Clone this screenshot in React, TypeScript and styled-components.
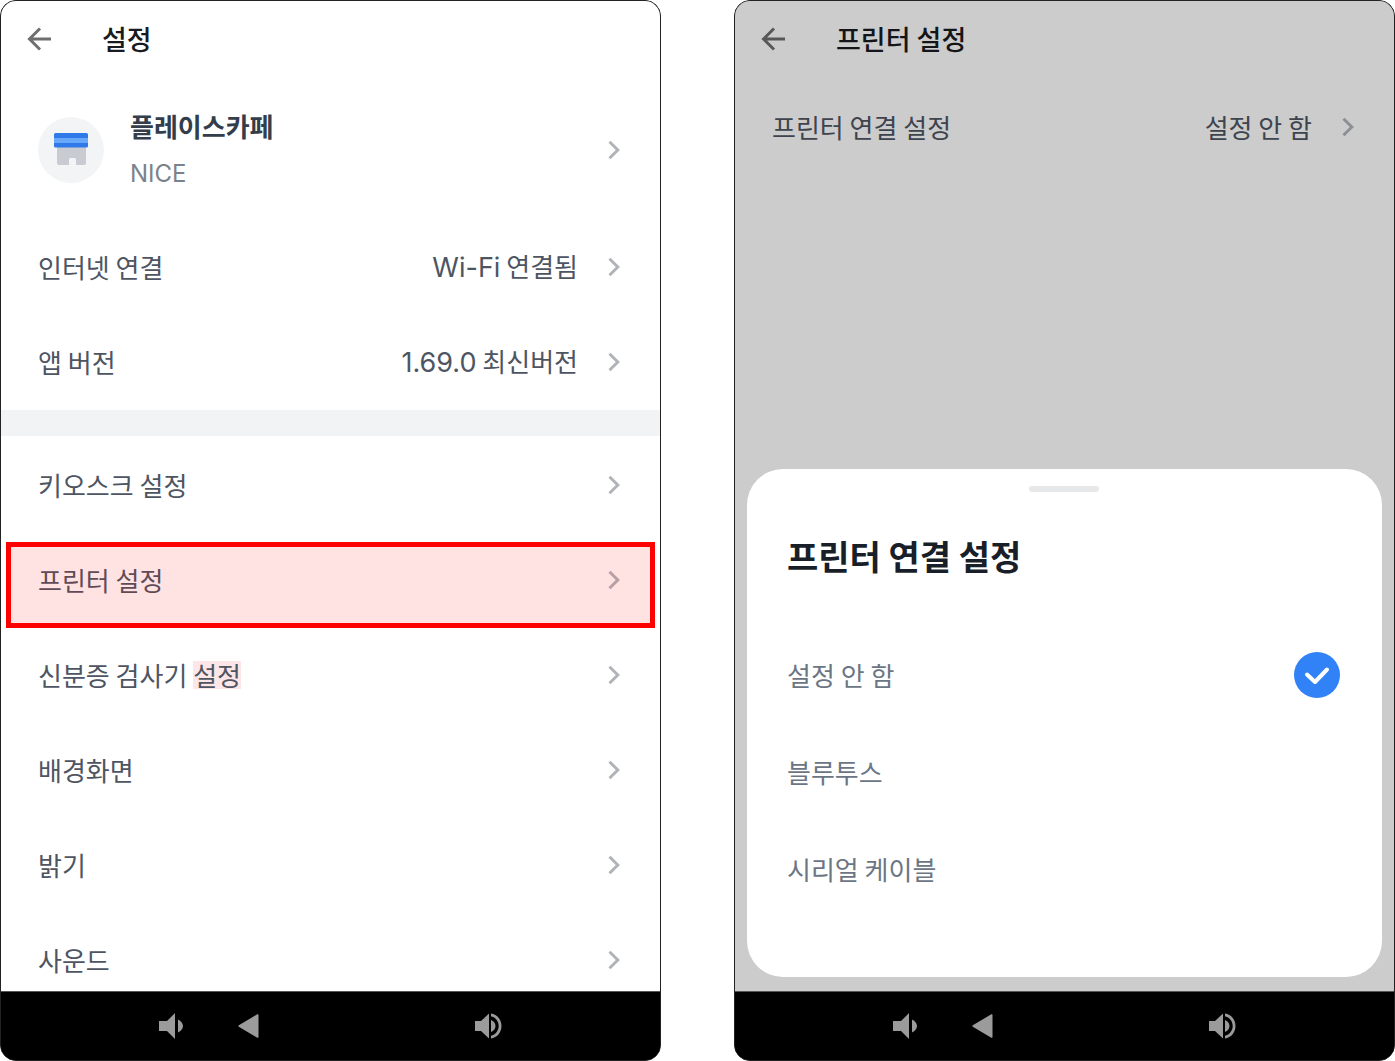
import React, { useState } from "react";
import styled, { createGlobalStyle } from "styled-components";

const GlobalStyle = createGlobalStyle`
  *, *::before, *::after { box-sizing: border-box; }
  body {
    margin: 0;
    background: #fff;
    font-family: "Noto Sans CJK KR", "Noto Sans", sans-serif;
  }
  button { font: inherit; color: inherit; background: none; border: 0; padding: 0; cursor: pointer; }
  h1, h2, p { margin: 0; }
`;

const Board = styled.main`
  display: grid;
  grid-template-columns: 1fr 1fr;
  gap: 73px;
  height: 100vh;
`;

const Phone = styled.section`
  display: flex;
  flex-direction: column;
  min-width: 0;
  min-height: 0;
  overflow: hidden;
  border: 1px solid #222;
  border-radius: 16px;
  background: #000;
`;

const Screen = styled.div`
  position: relative;
  flex: 1;
  min-height: 0;
  background: #fff;
`;

const Scroll = styled.div`
  height: 100%;
  overflow-y: auto;
  scrollbar-width: none;
`;

const Header = styled.header`
  display: flex;
  align-items: center;
  gap: 49px;
  height: 75px;
  padding-left: 26px;
`;

const IconButton = styled.button`
  display: flex;
`;

const Title = styled.h1`
  font-size: 27px;
  line-height: 40px;
  font-weight: 500;
  color: #191b20;
`;

const Profile = styled.button`
  display: flex;
  align-items: center;
  width: 100%;
  height: 143px;
  padding: 5px 39px 0 37px;
  text-align: left;
`;

const Avatar = styled.span`
  display: grid;
  place-items: center;
  width: 66px;
  height: 66px;
  margin-right: 26px;
  border-radius: 50%;
  background: #f2f4f6;
`;

const ProfileText = styled.span`
  display: flex;
  flex: 1;
  flex-direction: column;
  line-height: 48px;
`;

const ShopName = styled.span`
  font-size: 26px;
  font-weight: 700;
  color: #333d4b;
`;

const ShopVan = styled.span`
  font-family: Inter, sans-serif;
  font-size: 24px;
  color: #7b828c;
`;

const RowList = styled.div`
  padding-top: 3px;
`;

const Row = styled.button<{ $marked?: boolean }>`
  position: relative;
  display: flex;
  align-items: center;
  width: 100%;
  height: 95px;
  padding: 0 39px 0 37px;
  font-size: 26px;
  line-height: 40px;
  color: #4e5562;
  text-align: left;

  ${(p) =>
    p.$marked &&
    `&::after {
      content: "";
      position: absolute;
      inset: 10px 5px -1px 5px;
      border: 5px solid #ff0000;
      background: rgba(255, 0, 0, 0.11);
    }`}
`;

const RowLabel = styled.span`
  flex: 1;
`;

const RowValue = styled.span`
  margin-right: 29px;
`;

const Latin = styled.span`
  font-family: Inter, sans-serif;
  font-size: 27px;
`;

const Tint = styled.mark`
  display: inline-block;
  line-height: 28px;
  color: inherit;
  background: #fde6e8;
`;

const Divider = styled.div`
  height: 26px;
  margin: 1px 0;
  background: #f2f3f5;
`;

const NavBar = styled.nav`
  display: flex;
  align-items: center;
  height: 69px;
  padding: 0 24%;
  border-top: 1px solid #555;
  background: #000;
  color: #9b9b9b;
`;

const NavButton = styled.button<{ $place?: "next" | "end" }>`
  display: flex;
  margin-left: ${(p) => (p.$place === "next" ? "54px" : p.$place === "end" ? "auto" : "0")};
`;

const Dim = styled.div`
  position: absolute;
  inset: 0;
  display: flex;
  flex-direction: column;
  justify-content: flex-end;
  padding: 0 12px 14px;
  background: rgba(0, 0, 0, 0.2);
`;

const Sheet = styled.div`
  display: flex;
  flex-direction: column;
  padding: 17px 42px 60px 40px;
  border-radius: 36px;
  background: #fff;
`;

const Handle = styled.span`
  align-self: center;
  width: 70px;
  height: 6px;
  border-radius: 3px;
  background: #e6e8ea;
`;

const SheetTitle = styled.h2`
  margin: 40px 0 46px;
  font-size: 34px;
  line-height: 48px;
  font-weight: 700;
  color: #191f28;
`;

const Option = styled.label`
  position: relative;
  display: flex;
  align-items: center;
  justify-content: space-between;
  height: 97px;
  font-size: 26px;
  line-height: 40px;
  color: #6b7684;
  cursor: pointer;
`;

const Radio = styled.input`
  position: absolute;
  inset: 0;
  margin: 0;
  opacity: 0;
  cursor: pointer;
`;

const BackArrow = () => (
  <svg width="26" height="26" viewBox="0 0 26 26" fill="none" stroke="#6f6f6f" strokeWidth="3">
    <path d="M24 13H3M13 2.500 2.500 13 13 23.500" />
  </svg>
);

const Chevron = () => (
  <svg width="14" height="20" viewBox="0 0 14 20" fill="none" stroke="#b0b3b8" strokeWidth="3">
    <path d="M2.500 1.800 10.800 10l-8.300 8.200" />
  </svg>
);

const StoreIcon = () => (
  <svg width="34" height="34" viewBox="0 0 34 34">
    <path d="M3 14h29v16a2 2 0 0 1-2 2h-8v-5.500a1.500 1.500 0 0 0-1.500-1.500h-4a1.500 1.500 0 0 0-1.500 1.500V32H5a2 2 0 0 1-2-2z" fill="#c8ccd2" />
    <path d="M1.500 0h31A1.500 1.500 0 0 1 34 1.500V13a1.500 1.500 0 0 1-1.500 1.500h-31A1.500 1.500 0 0 1 0 13V1.500A1.500 1.500 0 0 1 1.500 0z" fill="#3079e8" />
    <path d="M0 5h34v5H0z" fill="#68a8fb" />
  </svg>
);

const VolumeLow = () => (
  <svg width="25" height="26" viewBox="0 0 25 26" fill="currentColor">
    <path d="M0 8h8l8-8v26l-8-8H0zM19 6.500c2 .8 5 3.500 5 6.500s-3 5.700-5 6.500z" />
  </svg>
);

const VolumeHigh = () => (
  <svg width="27" height="26" viewBox="0 0 27 26" fill="currentColor">
    <path d="M0 8h6l8-7.500v25L6 18H0zM16 7c2.500.8 4.500 3.300 4.500 6S18.500 18.200 16 19z" />
    <path d="M16 .5C22 1.300 26.500 6.500 26.500 13S22 24.700 16 25.500v-2.800c4.500-1 7.700-5 7.700-9.700S20.500 4.300 16 3.300z" />
  </svg>
);

const BackTriangle = () => (
  <svg width="21" height="24" viewBox="0 0 21 24" fill="currentColor">
    <path d="M20.500 1v22a.8.8 0 0 1-1.200.7L.8 12.700a.8.8 0 0 1 0-1.400L19.300.3a.8.8 0 0 1 1.200.7z" />
  </svg>
);

const CheckBadge = () => (
  <svg width="46" height="46" viewBox="0 0 46 46" fill="none">
    <circle cx="23" cy="23" r="23" fill="#3182f6" />
    <path d="m13 22.500 8 7.500L33 17.500" stroke="#fff" strokeWidth="4" strokeLinecap="round" strokeLinejoin="round" />
  </svg>
);

const SystemBar = () => (
  <NavBar aria-label="시스템">
    <NavButton aria-label="볼륨 작게"><VolumeLow /></NavButton>
    <NavButton aria-label="뒤로" $place="next"><BackTriangle /></NavButton>
    <NavButton aria-label="볼륨 크게" $place="end"><VolumeHigh /></NavButton>
  </NavBar>
);

type SettingRowProps = { label: React.ReactNode; value?: React.ReactNode; marked?: boolean };

const SettingRow = ({ label, value, marked }: SettingRowProps) => (
  <Row $marked={marked}>
    <RowLabel>{label}</RowLabel>
    {value && <RowValue>{value}</RowValue>}
    <Chevron />
  </Row>
);

const ScreenHeader = ({ title }: { title: string }) => (
  <Header>
    <IconButton aria-label="이전"><BackArrow /></IconButton>
    <Title>{title}</Title>
  </Header>
);

const options = ["설정 안 함", "블루투스", "시리얼 케이블"];

export default function App() {
  const [selected, setSelected] = useState(options[0]);

  return (
    <>
      <GlobalStyle />
      <Board>
        <Phone>
          <Screen>
            <Scroll>
              <ScreenHeader title="설정" />
              <Profile>
                <Avatar><StoreIcon /></Avatar>
                <ProfileText>
                  <ShopName>플레이스카페</ShopName>
                  <ShopVan>NICE</ShopVan>
                </ProfileText>
                <Chevron />
              </Profile>
              <SettingRow label="인터넷 연결" value={<><Latin>Wi-Fi</Latin> 연결됨</>} />
              <SettingRow label="앱 버전" value={<><Latin>1.69.0</Latin> 최신버전</>} />
              <Divider />
              <SettingRow label="키오스크 설정" />
              <SettingRow label="프린터 설정" marked />
              <SettingRow label={<>신분증 검사기 <Tint>설정</Tint></>} />
              <SettingRow label="배경화면" />
              <SettingRow label="밝기" />
              <SettingRow label="사운드" />
            </Scroll>
          </Screen>
          <SystemBar />
        </Phone>

        <Phone>
          <Screen>
            <ScreenHeader title="프린터 설정" />
            <RowList>
              <SettingRow label="프린터 연결 설정" value={selected} />
            </RowList>
            <Dim>
              <Sheet role="dialog" aria-labelledby="sheet-title">
                <Handle />
                <SheetTitle id="sheet-title">프린터 연결 설정</SheetTitle>
                {options.map((name) => (
                  <Option key={name}>
                    <Radio
                      type="radio"
                      name="printer"
                      checked={selected === name}
                      onChange={() => setSelected(name)}
                    />
                    {name}
                    {selected === name && <CheckBadge />}
                  </Option>
                ))}
              </Sheet>
            </Dim>
          </Screen>
          <SystemBar />
        </Phone>
      </Board>
    </>
  );
}
